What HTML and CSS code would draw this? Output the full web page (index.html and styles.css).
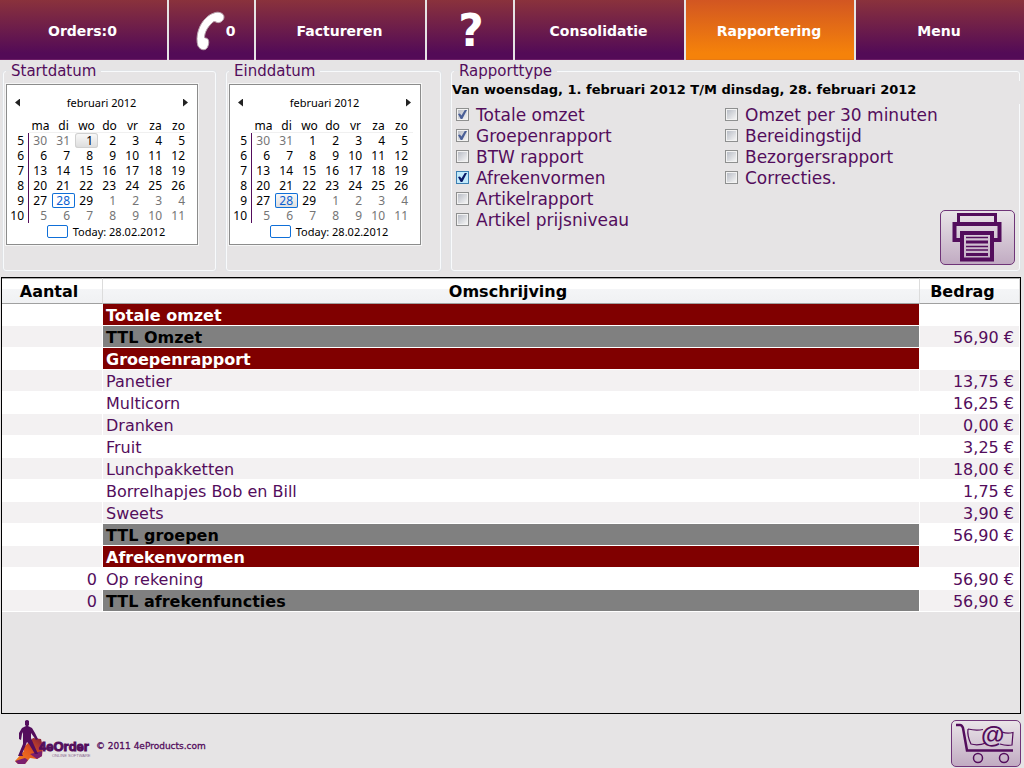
FILE: index.html
```
<!DOCTYPE html>
<html lang="nl">
<head>
<meta charset="utf-8">
<title>4eOrder - Rapportering</title>
<link rel="stylesheet" href="styles.css">
</head>
<body>
<nav class="nav">
  <button type="button">Orders:0</button>
  <button type="button" class="phone">
    <svg width="30" height="40" viewBox="0 0 30 40" aria-hidden="true"><path d="M18 2 C22 0 28 2 28 6 C28 10 23 13 20 11 C18 10 17 11 16 12 C11 17 9 21 8.500 26 C8.500 27 9 27 10 27 C14 28 13 34 11 37 C9 40 4 39 2 35 C-1 26 3 13 10 7 C13 4 15 3 18 2Z" fill="#fff" stroke="#b9a3ae" stroke-width="1"/></svg>
    <span>0</span>
  </button>
  <button type="button">Factureren</button>
  <button type="button" class="help">?</button>
  <button type="button">Consolidatie</button>
  <button type="button" class="active">Rapportering</button>
  <button type="button">Menu</button>
</nav>
<main class="main">
  <section class="filters">
    <fieldset class="group">
      <legend>Startdatum</legend>
      <div class="calendar">
        <div class="cal-head"><button type="button" class="prev" aria-label="Vorige maand"></button><span>februari 2012</span><button type="button" class="next" aria-label="Volgende maand"></button></div>
        <table class="days">
          <thead><tr><td></td><th>ma</th><th>di</th><th>wo</th><th>do</th><th>vr</th><th>za</th><th>zo</th></tr></thead>
          <tbody>
            <tr><th>5</th><td class="out">30</td><td class="out">31</td><td class="picked">1</td><td>2</td><td>3</td><td>4</td><td>5</td></tr>
            <tr><th>6</th><td>6</td><td>7</td><td>8</td><td>9</td><td>10</td><td>11</td><td>12</td></tr>
            <tr><th>7</th><td>13</td><td>14</td><td>15</td><td>16</td><td>17</td><td>18</td><td>19</td></tr>
            <tr><th>8</th><td>20</td><td>21</td><td>22</td><td>23</td><td>24</td><td>25</td><td>26</td></tr>
            <tr><th>9</th><td>27</td><td class="today">28</td><td>29</td><td class="out">1</td><td class="out">2</td><td class="out">3</td><td class="out">4</td></tr>
            <tr><th>10</th><td class="out">5</td><td class="out">6</td><td class="out">7</td><td class="out">8</td><td class="out">9</td><td class="out">10</td><td class="out">11</td></tr>
          </tbody>
        </table>
        <div class="cal-foot"><i></i><span>Today: 28.02.2012</span></div>
      </div>
    </fieldset>
    <fieldset class="group">
      <legend>Einddatum</legend>
      <div class="calendar">
        <div class="cal-head"><button type="button" class="prev" aria-label="Vorige maand"></button><span>februari 2012</span><button type="button" class="next" aria-label="Volgende maand"></button></div>
        <table class="days">
          <thead><tr><td></td><th>ma</th><th>di</th><th>wo</th><th>do</th><th>vr</th><th>za</th><th>zo</th></tr></thead>
          <tbody>
            <tr><th>5</th><td class="out">30</td><td class="out">31</td><td>1</td><td>2</td><td>3</td><td>4</td><td>5</td></tr>
            <tr><th>6</th><td>6</td><td>7</td><td>8</td><td>9</td><td>10</td><td>11</td><td>12</td></tr>
            <tr><th>7</th><td>13</td><td>14</td><td>15</td><td>16</td><td>17</td><td>18</td><td>19</td></tr>
            <tr><th>8</th><td>20</td><td>21</td><td>22</td><td>23</td><td>24</td><td>25</td><td>26</td></tr>
            <tr><th>9</th><td>27</td><td class="picked today">28</td><td>29</td><td class="out">1</td><td class="out">2</td><td class="out">3</td><td class="out">4</td></tr>
            <tr><th>10</th><td class="out">5</td><td class="out">6</td><td class="out">7</td><td class="out">8</td><td class="out">9</td><td class="out">10</td><td class="out">11</td></tr>
          </tbody>
        </table>
        <div class="cal-foot"><i></i><span>Today: 28.02.2012</span></div>
      </div>
    </fieldset>
    <fieldset class="group report">
      <legend>Rapporttype</legend>
      <p class="period">Van woensdag, 1. februari 2012 T/M dinsdag, 28. februari 2012</p>
      <div class="options">
        <div class="checks">
          <label><input type="checkbox" checked>Totale omzet</label>
          <label><input type="checkbox" checked>Groepenrapport</label>
          <label><input type="checkbox">BTW rapport</label>
          <label><input type="checkbox" class="hot" checked>Afrekenvormen</label>
          <label><input type="checkbox">Artikelrapport</label>
          <label><input type="checkbox">Artikel prijsniveau</label>
        </div>
        <div class="side">
          <div class="checks">
            <label><input type="checkbox">Omzet per 30 minuten</label>
            <label><input type="checkbox">Bereidingstijd</label>
            <label><input type="checkbox">Bezorgersrapport</label>
            <label><input type="checkbox">Correcties.</label>
          </div>
          <button type="button" class="tool print" aria-label="Afdrukken">
            <svg width="51" height="51" viewBox="0 0 51 51" fill="none" stroke="#530d5c" stroke-width="3" aria-hidden="true"><path d="M6.500 11V2.500H43.500V11" /><path d="M9 28H2.500V12H47.500V28H41" stroke-width="4"/><path d="M10 21H40V47.500H10Z" stroke-width="4"/><path d="M14 25.500H36M14 34.500H36M14 38H36" stroke-width="1.500"/><path d="M14 30H36M14 42.500H36" stroke-width="3"/></svg>
          </button>
        </div>
      </div>
    </fieldset>
  </section>
  <section class="grid">
    <table class="rows">
      <colgroup><col class="c-count"><col><col class="c-amount"></colgroup>
      <thead><tr><th>Aantal</th><th>Omschrijving</th><th>Bedrag</th></tr></thead>
      <tbody>
        <tr class="title"><td></td><td>Totale omzet</td><td></td></tr>
        <tr class="total"><td></td><td>TTL Omzet</td><td>56,90 €</td></tr>
        <tr class="title"><td></td><td>Groepenrapport</td><td></td></tr>
        <tr><td></td><td>Panetier</td><td>13,75 €</td></tr>
        <tr><td></td><td>Multicorn</td><td>16,25 €</td></tr>
        <tr><td></td><td>Dranken</td><td>0,00 €</td></tr>
        <tr><td></td><td>Fruit</td><td>3,25 €</td></tr>
        <tr><td></td><td>Lunchpakketten</td><td>18,00 €</td></tr>
        <tr><td></td><td>Borrelhapjes Bob en Bill</td><td>1,75 €</td></tr>
        <tr><td></td><td>Sweets</td><td>3,90 €</td></tr>
        <tr class="total"><td></td><td>TTL groepen</td><td>56,90 €</td></tr>
        <tr class="title"><td></td><td>Afrekenvormen</td><td></td></tr>
        <tr><td>0</td><td>Op rekening</td><td>56,90 €</td></tr>
        <tr class="total"><td>0</td><td>TTL afrekenfuncties</td><td>56,90 €</td></tr>
      </tbody>
    </table>
  </section>
</main>
<footer class="footer">
  <div class="brand">
    <svg width="76" height="46" viewBox="0 0 76 46" aria-label="4eOrder" role="img">
      <defs><linearGradient id="fire" x1="0" y1="1" x2="1" y2="0"><stop offset="0" stop-color="#f58a1c"/><stop offset=".5" stop-color="#e2571f"/><stop offset="1" stop-color="#7d1a3c"/></linearGradient></defs>
      <path d="M0 41 L9 31 L8 28 L18 18 L26 19 L28 27 L27 36 L22 39 L15 38 L10 44 L3 44Z" fill="url(#fire)"/>
      <path d="M0 41 L10 38 L13 40 L10 44 L3 44Z M15 34 L27 31 L27 36 L22 39Z" fill="#7a1f6d"/>
      <path d="M10 1 Q12 -1 14 1 L14 5 L13 6 L17 8 L20 13 L23 19 L21 20 L16 13 L16 18 L19 25 L23 34 L20 34 L14 24 L12 22 L10 27 L7 34 L8 36 L3 36 L8 24 L8 12 L7 14 L6 20 L4 19 L4 13 L7 8 L11 6 L10 5Z" fill="#530d5c"/>
      <text x="24" y="31" class="logo-name">4eOrder</text>
      <text x="37" y="37" class="logo-sub">ONLINE SOFTWARE</text>
    </svg>
    <span>© 2011 4eProducts.com</span>
  </div>
  <button type="button" class="tool cart" aria-label="Winkelwagen">
    <svg width="68" height="45" viewBox="0 0 68 45" fill="none" stroke="#530d5c" aria-hidden="true"><path d="M4 4H8Q10 4 11 7L15 29.500H61" stroke-width="2.500"/><path d="M16 8Q24 10 31 8.500M50 11Q55 13 61 11.500L60 24Q54 25 48 23M34 22Q26 25 19 23Q15 15 16 8" stroke-width="1.200"/><circle cx="26" cy="37" r="4.500" stroke-width="1.500"/><circle cx="52" cy="37" r="4.500" stroke-width="1.500"/><text x="29" y="22" class="at">@</text></svg>
  </button>
</footer>
</body>
</html>
```
FILE: styles.css
```
* { box-sizing: border-box; }
body {
  margin: 0;
  min-height: 100vh;
  display: flex;
  flex-direction: column;
  background: #e6e4e5;
  color: #530d5c;
  font: 16px/20px "DejaVu Sans", sans-serif;
}
button { font: inherit; color: inherit; padding: 0; border: 0; cursor: pointer; }

.nav {
  display: grid;
  grid-template-columns: 167fr 85fr 169fr 86fr 169fr 168fr 168fr;
  gap: 2px;
  height: 60px;
}
.nav button {
  background: linear-gradient(#8a323c, #530b57 90%);
  border-bottom: 1px solid #6b1d66;
  padding: 2px 2px 0 0;
  color: #fff;
  font-size: 14px;
  font-weight: bold;
}
.nav .active { background: linear-gradient(#d25622, #f5820a 90%); border-color: #e87a12; }
.nav .phone { display: flex; align-items: center; justify-content: center; padding-left: 10px; }
.nav .help { font-size: 44px; padding-left: 4px; }

.main { flex: 1; display: flex; flex-direction: column; padding: 1px 3px 0 1px; }
.filters {
  display: grid;
  grid-template-columns: 213px 215px 1fr;
  column-gap: 10px;
  padding: 0 1px 0 2px;
}
.group {
  margin: 0;
  min-width: 0;
  height: 210px;
  padding: 3px 0 0 2px;
  border: 1px solid #f8fafc;
  border-radius: 3px;
  box-shadow: 0 0 0 1px #dde3ea80;
}
.group legend { padding: 0 5px; font-size: 15px; line-height: 20px; }

.calendar {
  width: 192px;
  height: 161px;
  background: #fff;
  border: 1px solid #8c8c8c;
  outline: 1px solid #f6f6f6;
  color: #000;
  font: 12px/15px "Noto Sans", sans-serif;
}
.cal-head { display: flex; align-items: center; justify-content: space-between; padding: 10px 9px 8px 8px; font-size: 11px; }
.cal-head button { width: 5px; height: 8px; background: #222; }
.prev { clip-path: polygon(100% 0, 0 50%, 100% 100%); }
.next { clip-path: polygon(0 0, 100% 50%, 0 100%); }
.days { width: 183px; border-collapse: separate; border-spacing: 0; table-layout: fixed; }
.days th, .days td { height: 15px; padding: 0 5px 0 0; font-weight: normal; text-align: right; line-height: 13px; }
.days thead th { padding: 0; text-align: center; border-bottom: 1px solid #f0f0f0; }
.days thead td { width: 22px; }
.days tbody th { padding-right: 4px; border-right: 1px solid #530d5c; }
.days .out { color: #757575; }
.days .picked { border-radius: 3px; background: linear-gradient(#fafafa, #dcdcdc); box-shadow: inset 0 0 0 1px #d0d0d0; }
.days .today { border-radius: 2px; color: #0a5fd0; box-shadow: inset 0 0 0 1px #0f6fd8; }
.cal-foot { display: flex; align-items: center; justify-content: center; gap: 5px; padding: 1px 0 0 8px; font-size: 11px; }
.cal-foot i { width: 21px; height: 13px; border: 1px solid #0f6fd8; border-radius: 2px; }

.report { padding: 0; }
.report legend { margin-left: 2px; }
.period {
  position: relative;
  margin: 0 -1px 0 0;
  background: #e6e4e5;
  color: #000;
  font-size: 13px;
  font-weight: bold;
  line-height: 17px;
  padding-bottom: 6px;
}
.options { display: grid; grid-template-columns: 269px 1fr; padding: 0 4px; }
.checks label { display: flex; align-items: center; gap: 7px; height: 21px; font-size: 17px; white-space: nowrap; }
.checks input {
  appearance: none;
  flex: none;
  width: 13px;
  height: 13px;
  margin: 0;
  border: 1px solid #8e8f8f;
  background: linear-gradient(135deg, #b9bdc6, #f4f4f4) center / 9px 9px no-repeat, #f2f2f2;
  display: grid;
  place-items: center;
}
.checks input:checked::before {
  content: "";
  width: 9px;
  height: 9px;
  background: #4a5f97;
  clip-path: polygon(0 45%, 22% 38%, 38% 60%, 75% 0, 100% 0, 48% 100%, 30% 100%);
}
.checks .hot { border-color: #3c7fb1; background: #c2eafc; }
.checks .hot:checked::before { background: #0b1a68; }
.side { display: flex; flex-direction: column; }
.tool {
  display: grid;
  place-items: center;
  border: 1px solid #6f3478;
  border-radius: 5px;
  background: linear-gradient(#e9e4e8, #c1abc2);
}
.print { width: 75px; height: 55px; margin-top: 22px; align-self: flex-end; }

.grid { flex: 1; margin-top: 6px; border: 1px solid #000; }
.rows { width: 100%; border-collapse: separate; border-spacing: 0; table-layout: fixed; }
.c-count { width: 101px; }
.c-amount { width: 100px; }
.rows th {
  height: 26px;
  padding: 2px 6px 0 0;
  background: linear-gradient(#fff 40%, #f4f5f7 42%, #f0f1f3);
  border-top: 1px solid #aaa;
  border-bottom: 1px solid #a0a0a0;
  border-right: 1px solid #dcdcdc;
  color: #000;
}
.rows th:last-child { padding-right: 14px; }
.rows td { height: 22px; padding: 2px 6px 0 3px; line-height: 19px; border-right: 1px solid #fff; border-bottom: 1px solid #fff; background: #fff; }
.rows tbody tr:nth-child(even) td { background: #f3f1f2; }
.rows td:first-child, .rows td:last-child { text-align: right; padding-right: 5px; }
.rows tbody .title td:nth-child(2) { background: #800000; color: #fff; font-weight: bold; }
.rows tbody .total td:nth-child(2) { background: #808080; color: #000; font-weight: bold; }

.footer { display: flex; align-items: center; justify-content: space-between; height: 54px; padding: 4px 3px 0 15px; }
.brand { display: flex; align-items: center; gap: 5px; font-size: 9px; }
.brand span { padding-top: 5px; -webkit-text-stroke: 0.3px #530d5c; }
.logo-name { font: bold 13px "Liberation Sans", sans-serif; fill: #530d5c; stroke: #530d5c; stroke-width: 1; }
.logo-sub { font: 4px "Liberation Sans", sans-serif; fill: #8a6a8f; }
.cart { width: 70px; height: 47px; }
.at { font: bold 24px/24px "Liberation Sans", sans-serif; fill: #530d5c; stroke: none; }
```
